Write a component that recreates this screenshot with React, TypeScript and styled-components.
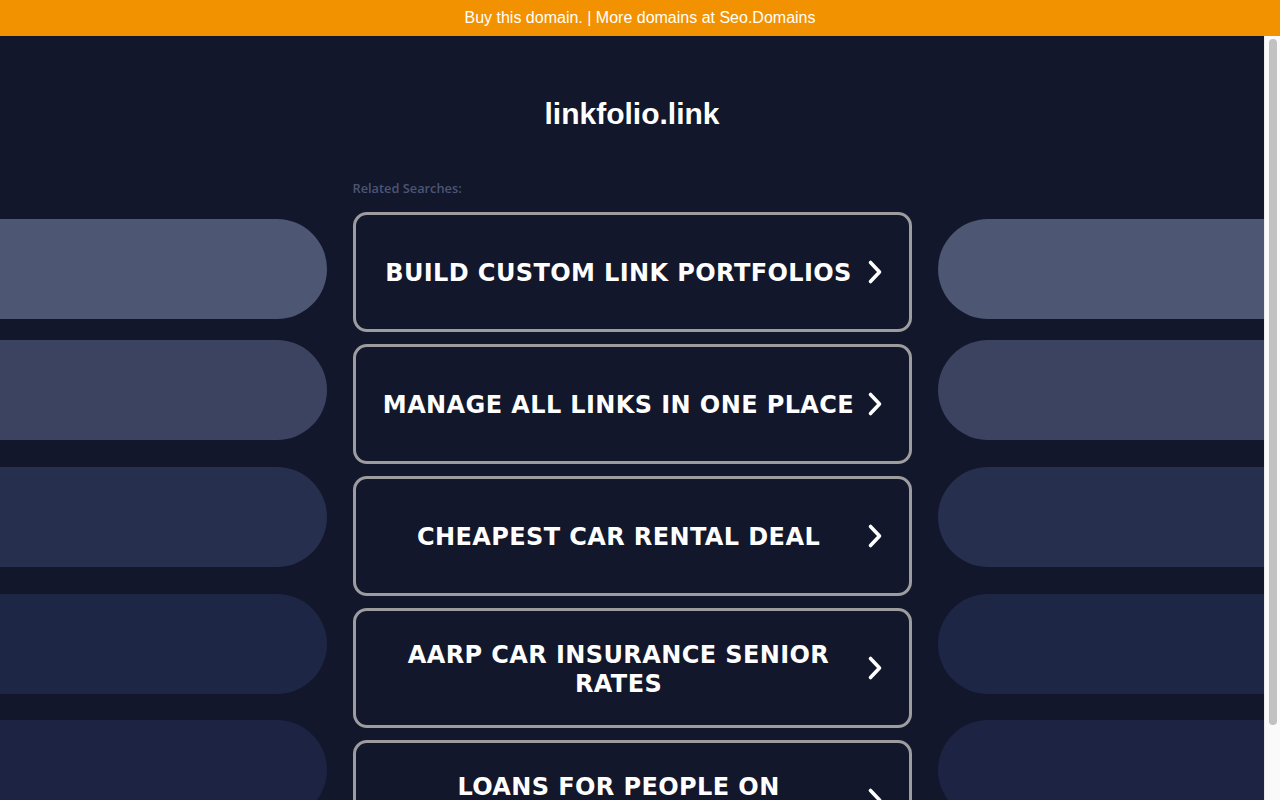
import React from "react";
import styled, { createGlobalStyle } from "styled-components";

const GlobalStyle = createGlobalStyle`
  html, body {
    margin: 0;
    padding: 0;
    height: 100%;
    overflow: hidden;
  }
  #root {
    height: 100%;
  }
`;

const Page = styled.div`
  height: 100vh;
  display: flex;
  flex-direction: column;
  background: #12172b;
  font-family: "Liberation Sans", Arial, sans-serif;
`;

const Banner = styled.a`
  flex: 0 0 36px;
  display: flex;
  align-items: center;
  justify-content: center;
  background: #f39200;
  color: #ffffff;
  font-size: 16px;
  text-decoration: none;
`;

const Body = styled.div`
  flex: 1;
  min-height: 0;
  display: flex;
`;

const Viewport = styled.div`
  flex: 1;
  min-width: 0;
  overflow: hidden;
  background: #12172b;
`;

const ScrollTrack = styled.div`
  flex: 0 0 15px;
  box-sizing: border-box;
  padding: 3px 3px 0 4px;
  background: #fafafa;
  border-left: 1px solid #ececec;
`;

const ScrollThumb = styled.div`
  width: 8px;
  height: 686px;
  border-radius: 4px;
  background: #c1c1c1;
`;

const Title = styled.h1`
  margin: 0;
  padding-top: 61px;
  font-size: 30px;
  line-height: 34px;
  font-weight: 700;
  color: #ffffff;
  text-align: center;
`;

const Layout = styled.div`
  margin-top: 44px;
  padding-bottom: 24px;
  display: grid;
  grid-template-columns: 1fr 559px 1fr;
  column-gap: 26px;
  align-items: start;
`;

const SideColumn = styled.div`
  padding-top: 44px;
  display: flex;
  flex-direction: column;
`;

const Pill = styled.div<{ $color: string; $gap: number; $side: "left" | "right" }>`
  height: 100px;
  margin-top: ${(p) => p.$gap}px;
  background: ${(p) => p.$color};
  border-radius: ${(p) => (p.$side === "left" ? "0 50px 50px 0" : "50px 0 0 50px")};
`;

const Center = styled.div`
  display: flex;
  flex-direction: column;
`;

const Label = styled.div`
  padding-top: 6px;
  margin-bottom: 17px;
  font-family: "Open Sans", "Liberation Sans", sans-serif;
  font-weight: 600;
  font-size: 12.8px;
  line-height: 14px;
  color: #4b5574;
`;

const CardList = styled.div`
  display: flex;
  flex-direction: column;
  gap: 12px;
`;

const Card = styled.a`
  box-sizing: border-box;
  height: 120px;
  display: flex;
  align-items: center;
  padding: 0 26px 0 27px;
  border: 3px solid #9d9d9f;
  border-radius: 14px;
  background: #12172b;
  text-decoration: none;
`;

const CardText = styled.span`
  flex: 1;
  padding-top: 3px;
  text-align: center;
  font-family: "DejaVu Sans", Verdana, sans-serif;
  font-weight: 700;
  font-size: 24px;
  line-height: 29px;
  letter-spacing: 0.4px;
  color: #ffffff;
`;

const Chevron = styled.svg`
  flex: 0 0 16px;
  width: 16px;
  height: 26px;
  margin-left: 12px;
`;

const pills = [
  { color: "#4d5673", gap: 0 },
  { color: "#3b4361", gap: 21 },
  { color: "#272f4e", gap: 27 },
  { color: "#1e2645", gap: 27 },
  { color: "#1c2343", gap: 26 },
];

const searches = [
  "BUILD CUSTOM LINK PORTFOLIOS",
  "MANAGE ALL LINKS IN ONE PLACE",
  "CHEAPEST CAR RENTAL DEAL",
  "AARP CAR INSURANCE SENIOR RATES",
  "LOANS FOR PEOPLE ON DISABILITY",
];

function Side({ side }: { side: "left" | "right" }) {
  return (
    <SideColumn>
      {pills.map((p, i) => (
        <Pill key={i} $color={p.color} $gap={p.gap} $side={side} />
      ))}
    </SideColumn>
  );
}

export default function App() {
  return (
    <>
      <GlobalStyle />
      <Page>
        <Banner href="#">Buy this domain. | More domains at Seo.Domains</Banner>
        <Body>
          <Viewport>
            <Title>linkfolio.link</Title>
            <Layout>
              <Side side="left" />
              <Center>
                <Label>Related Searches:</Label>
                <CardList>
                  {searches.map((s) => (
                    <Card key={s} href="#">
                      <CardText>{s}</CardText>
                      <Chevron viewBox="0 0 16 26" aria-hidden="true">
                        <path
                          d="M3.5 3.5 L12.5 13 L3.5 22.5"
                          fill="none"
                          stroke="#ffffff"
                          strokeWidth="3.6"
                          strokeLinecap="round"
                          strokeLinejoin="round"
                        />
                      </Chevron>
                    </Card>
                  ))}
                </CardList>
              </Center>
              <Side side="right" />
            </Layout>
          </Viewport>
          <ScrollTrack>
            <ScrollThumb />
          </ScrollTrack>
        </Body>
      </Page>
    </>
  );
}
